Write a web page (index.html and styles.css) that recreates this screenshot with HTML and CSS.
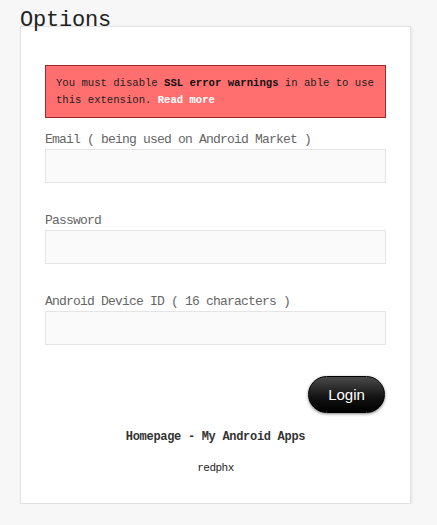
FILE: index.html
```html
<!DOCTYPE html>
<html>
<head>
    <title>Options</title>
    <link rel="stylesheet" href="styles.css">
</head>
<body>
    <h1 class="title">Options</h1>
    <div class="card">
        <div class="warning">
            You must disable <b>SSL error warnings</b> in able to use this extension. <a href="#" class="read-more">Read more</a>
        </div>

        <form id="optionsForm">
            <label for="email">Email ( being used on Android Market )</label>
            <input type="text" id="email" name="email">

            <label for="password">Password</label>
            <input type="password" id="password" name="password">

            <label for="deviceId">Android Device ID ( 16 characters )</label>
            <input type="text" id="deviceId" name="deviceId">

            <div class="actions">
                <button type="submit" class="login-btn">Login</button>
            </div>
        </form>

        <div class="footer">
            <a href="#" class="footer-link">Homepage - My Android Apps</a>
            <div class="author">redphx</div>
        </div>
    </div>
</body>
</html>
```

FILE: styles.css
```css
body {
    margin: 0;
    padding: 0 0 0 20px;
    background: #f7f7f7;
    font-family: "Liberation Mono", "DejaVu Sans Mono", monospace;
    color: #333;
}

.title {
    margin: 0 0 -8px 0;
    padding-top: 8px;
    font-size: 22px;
    font-weight: normal;
    line-height: 26px;
    color: #222;
    letter-spacing: -0.2px;
    position: relative;
}

.card {
    width: 341px;
    padding: 38px 24px 27px 24px;
    background: #fff;
    border: 1px solid #e2e2e2;
    box-shadow: 1px 1px 3px rgba(0, 0, 0, 0.08);
}

.warning {
    background: #ff6f6f;
    border: 1px solid #a0282a;
    padding: 9px 10px 8px 10px;
    font-size: 10.6px;
    line-height: 17px;
    color: #222;
}

.warning b {
    color: #111;
}

.read-more {
    color: #fff;
    font-weight: bold;
    text-decoration: none;
}

label {
    display: block;
    font-size: 13px;
    line-height: 14px;
    padding-top: 2px;
    letter-spacing: -0.8px;
    color: #666;
    margin-top: 29px;
    margin-bottom: 2px;
}

label[for="email"] {
    margin-top: 13px;
}

input[type="text"],
input[type="password"] {
    display: block;
    width: 100%;
    height: 34px;
    box-sizing: border-box;
    background: #fafafa;
    border: 1px solid #e4e4e4;
    margin: 0;
    padding: 4px 8px;
}

.actions {
    display: flex;
    justify-content: flex-end;
    margin-top: 31px;
    padding-right: 1px;
}

.login-btn {
    width: 77px;
    height: 37px;
    border-radius: 19px;
    border: 1px solid #000;
    background: linear-gradient(#4a4a4a, #111 60%, #000);
    color: #fff;
    font-family: "Liberation Sans", Arial, sans-serif;
    font-size: 15px;
    box-shadow: 0 1px 3px rgba(0, 0, 0, 0.5);
    cursor: pointer;
}

.footer {
    text-align: center;
    margin-top: 16px;
}

.footer-link {
    display: block;
    font-size: 12px;
    line-height: 16px;
    font-weight: bold;
    letter-spacing: -0.3px;
    color: #333;
    text-decoration: none;
}

.author {
    font-size: 11px;
    line-height: 16px;
    letter-spacing: -0.5px;
    color: #222;
    margin-top: 15px;
}
```
